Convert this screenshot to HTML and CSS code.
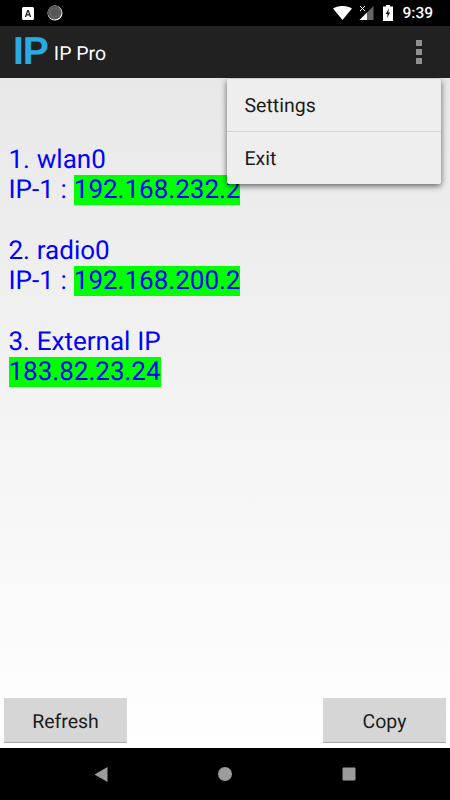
FILE: index.html
```html
<!DOCTYPE html>
<html lang="en">
<head>
    <meta charset="UTF-8">
    <meta name="viewport" content="width=device-width, initial-scale=1.0">
    <title>IP Pro</title>
    <link rel="stylesheet" href="styles.css">
</head>
<body>
    <div id="container">
        <!-- Status bar -->
        <div class="status-bar">
            <div class="status-left">
                <svg class="icon-a" width="12" height="13" viewBox="0 0 12 13">
                    <rect x="0" y="0" width="12" height="13" rx="1.5" fill="#fff"/>
                    <path d="M2.8 10 L5.2 3 H6.8 L9.2 10 H7.8 L7.3 8.4 H4.7 L4.2 10 Z M5.1 7.2 H6.9 L6 4.6 Z" fill="#222"/>
                </svg>
                <svg width="16" height="16" viewBox="0 0 16 16">
                    <circle cx="8" cy="8" r="7.5" fill="#fff"/>
                    <circle cx="7.6" cy="7.6" r="7" fill="#555"/>
                    <circle cx="7.6" cy="7.6" r="4.6" fill="none" stroke="#707070" stroke-width="1.5" stroke-dasharray="1 1"/>
                </svg>
            </div>
            <div class="status-right">
                <svg width="20" height="14" viewBox="0 0 20 14">
                    <path d="M0 2.6 C5.5 -0.9 13.5 -0.9 19 2.6 L9.5 14 Z" fill="#fff"/>
                </svg>
                <svg class="icon-signal" width="15" height="16" viewBox="0 0 15 16">
                    <path d="M14.5 1 V15 H0.5 Z" fill="#666"/>
                    <path d="M8 7.5 V15 H0.5 Z" fill="#fff"/>
                    <path d="M1 1 L6 6 M6 1 L1 6" stroke="#fff" stroke-width="1" fill="none"/>
                </svg>
                <svg class="icon-battery" width="10" height="16" viewBox="0 0 10 16">
                    <path d="M3 0 H7 V1.4 H10 V16 H0 V1.4 H3 Z" fill="#fff"/>
                    <path d="M5.8 3.5 L2.8 9 H4.6 L4 13 L7.2 7.4 H5.3 Z" fill="#111"/>
                </svg>
                <span class="clock">9:39</span>
            </div>
        </div>

        <!-- Toolbar -->
        <div class="toolbar">
            <div class="logo">IP</div>
            <div class="app-title">IP Pro</div>
            <div class="overflow-btn">
                <span></span><span></span><span></span>
            </div>
        </div>

        <!-- Main content -->
        <div class="content">
            <div class="ip-list">
                <div>1. wlan0</div>
                <div>IP-1 : <span class="addr">192.168.232.2</span></div>
                <div class="spacer"></div>
                <div>2. radio0</div>
                <div>IP-1 : <span class="addr">192.168.200.2</span></div>
                <div class="spacer"></div>
                <div>3. External IP</div>
                <div><span class="addr">183.82.23.24</span></div>
            </div>
            <div class="buttons">
                <button class="btn">Refresh</button>
                <button class="btn">Copy</button>
            </div>
        </div>

        <!-- Navigation bar -->
        <div class="nav-bar">
            <svg width="14" height="15" viewBox="0 0 14 15"><path d="M13.5 0 V15 L0.5 7.5 Z" fill="#9c9c9c"/></svg>
            <svg width="14" height="14" viewBox="0 0 14 14"><circle cx="7" cy="7" r="7" fill="#9c9c9c"/></svg>
            <svg width="14" height="14" viewBox="0 0 14 14"><rect x="0.5" y="0.5" width="13" height="13" rx="1" fill="#9c9c9c"/></svg>
        </div>

        <!-- Overflow menu -->
        <div class="menu">
            <div class="menu-item">Settings</div>
            <div class="menu-item">Exit</div>
        </div>
    </div>
</body>
</html>
```

FILE: styles.css
```css
body {
    margin: 0;
    overflow: hidden;
}

#container {
    position: relative;
    display: flex;
    flex-direction: column;
    width: 450px;
    height: 800px;
    font-family: Roboto, "Liberation Sans", sans-serif;
    text-rendering: geometricPrecision;
}

/* Status bar */
.status-bar {
    display: flex;
    justify-content: space-between;
    align-items: center;
    height: 26px;
    flex: none;
    background-color: #000;
    padding: 0 17px 0 22px;
    box-sizing: border-box;
}

.status-left {
    display: flex;
    align-items: center;
    gap: 13px;
}

.status-right {
    display: flex;
    align-items: center;
}

.icon-signal {
    margin-left: 6px;
}

.icon-battery {
    margin-left: 9px;
}

.clock {
    color: #fff;
    font-size: 15.5px;
    font-weight: 500;
    margin-left: 9px;
}

/* Toolbar */
.toolbar {
    display: flex;
    align-items: center;
    height: 52px;
    flex: none;
    background-color: #212121;
    padding-left: 13px;
    box-sizing: border-box;
}

.logo {
    font-family: "Liberation Sans", sans-serif;
    font-size: 39px;
    font-weight: bold;
    color: #29abe2;
    letter-spacing: -1px;
}

.app-title {
    color: #fff;
    font-size: 19.5px;
    margin-left: 6px;
    margin-top: 2px;
}

.overflow-btn {
    display: flex;
    flex-direction: column;
    gap: 3px;
    margin-left: auto;
    margin-right: 28px;
}

.overflow-btn span {
    display: block;
    width: 6px;
    height: 6px;
    background-color: #909090;
}

/* Main content */
.content {
    flex: 1;
    display: flex;
    flex-direction: column;
    justify-content: space-between;
    background: linear-gradient(#e8e8e8, #fff);
    padding: 67px 4px 5px;
}

.ip-list {
    padding-left: 4.5px;
    color: #0000ff;
    font-size: 26px;
    line-height: 30.3px;
    word-spacing: 0.4px;
}

.spacer {
    height: 30.3px;
}

.addr {
    background-color: #00ff00;
}

.buttons {
    display: flex;
    justify-content: space-between;
}

.btn {
    width: 123px;
    height: 45px;
    padding: 2px 0 0;
    border: none;
    border-bottom: 1px solid #a8a8a8;
    border-radius: 1px;
    background-color: #d6d6d6;
    color: #1c1c1c;
    font-family: Roboto, sans-serif;
    font-size: 19.5px;
    text-rendering: geometricPrecision;
}

/* Navigation bar */
.nav-bar {
    display: flex;
    justify-content: center;
    align-items: center;
    gap: 110px;
    height: 52px;
    flex: none;
    background-color: #000;
}

/* Overflow menu */
.menu {
    position: absolute;
    top: 79px;
    left: 227px;
    width: 214px;
    background-color: #eeeeee;
    border-radius: 2px;
    box-shadow: 0 2px 6px rgba(0, 0, 0, 0.6);
}

.menu-item {
    height: 52px;
    line-height: 54px;
    padding-left: 17.5px;
    font-size: 19.5px;
    color: #1c1c1c;
}

.menu-item + .menu-item {
    border-top: 1px solid #d4d4d4;
}
```
